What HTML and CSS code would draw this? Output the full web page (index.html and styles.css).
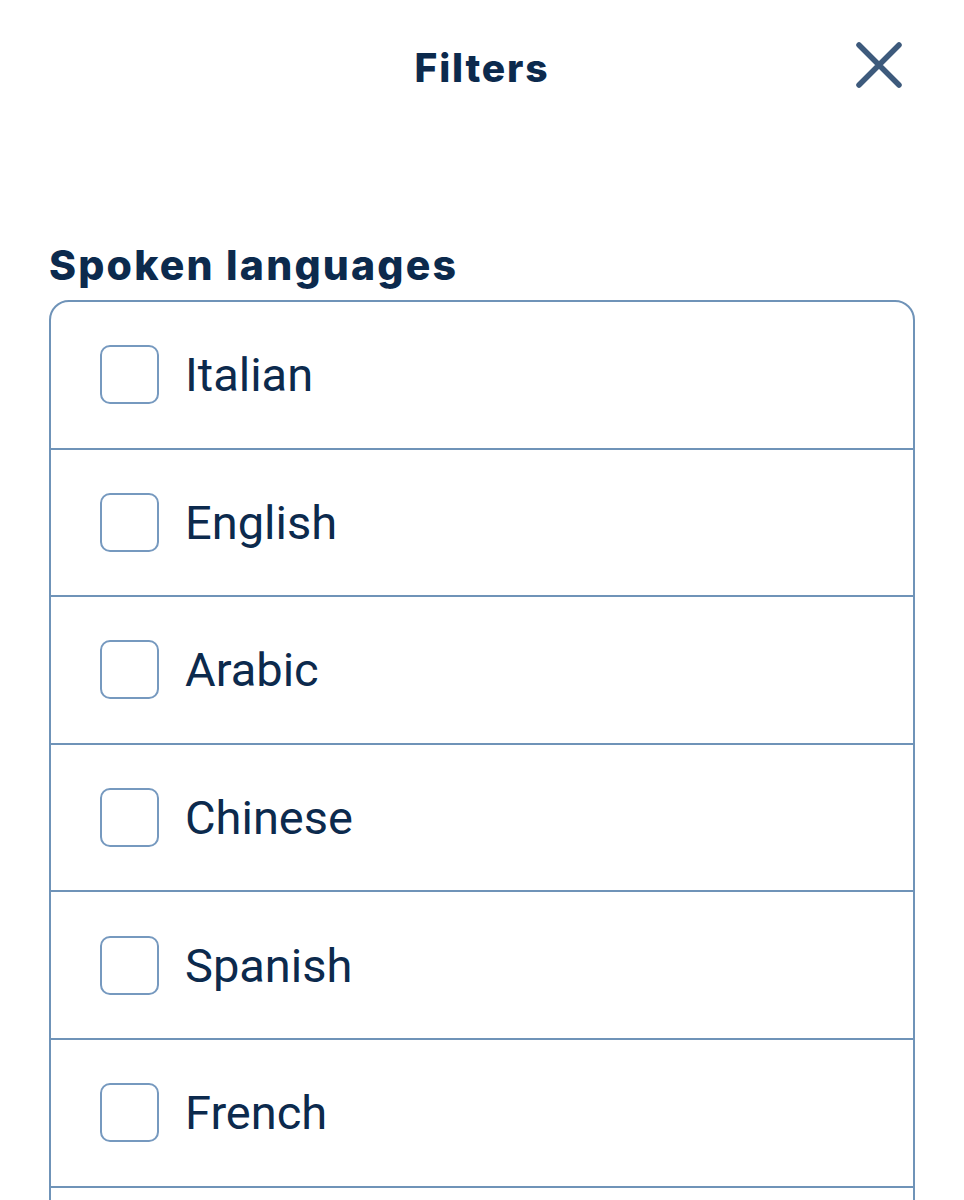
FILE: index.html
```html
<!DOCTYPE html>
<html lang="en">
<head>
<meta charset="utf-8">
<title>Filters</title>
<link rel="stylesheet" href="styles.css">
</head>
<body>
<div class="sheet">
  <header class="topbar">
    <h1 class="title">Filters</h1>
    <button class="close" aria-label="Close">
      <svg viewBox="0 0 48 48" width="48" height="48"><path d="M4 4 L44 44 M44 4 L4 44" stroke="#3d5a7c" stroke-width="5.5" stroke-linecap="round" fill="none"/></svg>
    </button>
  </header>
  <section class="group">
    <h2 class="group-title">Spoken languages</h2>
    <ul class="options">
      <li class="option"><span class="box"></span><span class="label">Italian</span></li>
      <li class="option"><span class="box"></span><span class="label">English</span></li>
      <li class="option"><span class="box"></span><span class="label">Arabic</span></li>
      <li class="option"><span class="box"></span><span class="label">Chinese</span></li>
      <li class="option"><span class="box"></span><span class="label">Spanish</span></li>
      <li class="option"><span class="box"></span><span class="label">French</span></li>
      <li class="option option-hidden"><span class="box"></span></li>
    </ul>
  </section>
</div>
</body>
</html>
```

FILE: styles.css
```css
html, body {
  margin: 0;
  padding: 0;
  background: #ffffff;
}
.sheet {
  width: 964px;
  height: 1200px;
  overflow: hidden;
  box-sizing: border-box;
  padding: 0 49px;
}
.topbar {
  position: relative;
  height: 134px;
  display: flex;
  align-items: center;
  justify-content: center;
}
.title {
  margin: 0;
  font-family: Inter, "Liberation Sans", sans-serif;
  font-weight: 800;
  font-size: 39px;
  color: #0c2a4d;
  letter-spacing: 1.8px;
}
.close {
  position: absolute;
  right: 12px;
  top: 41px;
  width: 48px;
  height: 48px;
  padding: 0;
  border: 0;
  background: none;
  display: flex;
}
.group {
  padding-top: 108px;
}
.group-title {
  margin: 0 0 12px;
  font-family: Inter, "Liberation Sans", sans-serif;
  font-weight: 800;
  font-size: 41px;
  line-height: 46px;
  color: #0c2a4d;
  letter-spacing: 2.2px;
}
.options {
  list-style: none;
  margin: 0;
  padding: 0;
  border: 2px solid #6f93b8;
  border-radius: 20px;
}
.option {
  height: 145.6px;
  border-bottom: 2px solid #6f93b8;
  display: flex;
  align-items: center;
  padding-left: 49px;
  gap: 26px;
}
.box {
  width: 55px;
  height: 55px;
  border: 2.5px solid #7699bf;
  border-radius: 10px;
  flex: none;
}
.label {
  font-family: Roboto, "Liberation Sans", sans-serif;
  font-size: 47px;
  color: #0c2a4d;
}
```
